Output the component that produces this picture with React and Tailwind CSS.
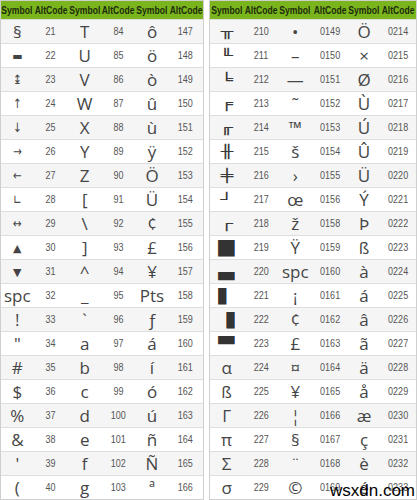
import React from "react";

const leftRows = [
  ["§", "21", "T", "84", "ô", "147"],
  ["▬", "22", "U", "85", "ö", "148"],
  ["↨", "23", "V", "86", "ò", "149"],
  ["↑", "24", "W", "87", "û", "150"],
  ["↓", "25", "X", "88", "ù", "151"],
  ["→", "26", "Y", "89", "ÿ", "152"],
  ["←", "27", "Z", "90", "Ö", "153"],
  ["∟", "28", "[", "91", "Ü", "154"],
  ["↔", "29", "\\", "92", "¢", "155"],
  ["▲", "30", "]", "93", "£", "156"],
  ["▼", "31", "^", "94", "¥", "157"],
  ["spc", "32", "_", "95", "Pts", "158"],
  ["!", "33", "`", "96", "ƒ", "159"],
  ['"', "34", "a", "97", "á", "160"],
  ["#", "35", "b", "98", "í", "161"],
  ["$", "36", "c", "99", "ó", "162"],
  ["%", "37", "d", "100", "ú", "163"],
  ["&", "38", "e", "101", "ñ", "164"],
  ["'", "39", "f", "102", "Ñ", "165"],
  ["(", "40", "g", "103", "ª", "166"],
];

const rightRows = [
  ["╥", "210", "•", "0149", "Ö", "0214"],
  ["╙", "211", "–", "0150", "×", "0215"],
  ["╘", "212", "—", "0151", "Ø", "0216"],
  ["╒", "213", "˜", "0152", "Ù", "0217"],
  ["╓", "214", "™", "0153", "Ú", "0218"],
  ["╫", "215", "š", "0154", "Û", "0219"],
  ["╪", "216", "›", "0155", "Ü", "0220"],
  ["┘", "217", "œ", "0156", "Ý", "0221"],
  ["┌", "218", "ž", "0158", "Þ", "0222"],
  ["█", "219", "Ÿ", "0159", "ß", "0223"],
  ["▄", "220", "spc", "0160", "à", "0224"],
  ["▌", "221", "¡", "0161", "á", "0225"],
  ["▐", "222", "¢", "0162", "â", "0226"],
  ["▀", "223", "£", "0163", "ã", "0227"],
  ["α", "224", "¤", "0164", "ä", "0228"],
  ["ß", "225", "¥", "0165", "å", "0229"],
  ["Γ", "226", "¦", "0166", "æ", "0230"],
  ["π", "227", "§", "0167", "ç", "0231"],
  ["Σ", "228", "¨", "0168", "è", "0232"],
  ["σ", "229", "©", "0169", "é", "0233"],
];

const headers = ["Symbol", "AltCode", "Symbol", "AltCode", "Symbol", "AltCode"];

// glyphs that the symbol font lacks get their own size so they sit like the original
const blocks = "█▄▌▐▀";
const boxes = "╥╙╘╒╓╫╪┘┌";
const arrows = "↨↑↓→←↔∟";
const small = "▲▼▬";

function symbolClass(s) {
  if (blocks.includes(s)) return "text-[14px] scale-x-[1.5] text-[#333]";
  if (boxes.includes(s)) return "text-[13px] scale-x-[1.6] text-[#3a3a3a]";
  if (arrows.includes(s)) return "text-[13px] scale-x-[0.8]";
  if (small.includes(s)) return "text-[11px]";
  return "text-[17px]";
}

const cols =
  "grid grid-cols-[minmax(0,33fr)_minmax(0,35fr)_minmax(0,33fr)_minmax(0,35fr)_minmax(0,33fr)_minmax(0,35fr)]";

function CodeTable({ rows, width }) {
  return (
    <div className={`${width} border border-[#cfcfcf] flex flex-col`}>
      {/* Header */}
      <div className={`${cols} h-[18px] bg-[#7ab51d] items-center`}>
        {headers.map((h, i) => (
          <div key={i} className="flex justify-center min-w-0">
            <span className="inline-block text-[11px] font-bold text-[#1d2b0b] leading-none scale-x-[0.78] whitespace-nowrap font-['Liberation_Sans',Arial,sans-serif]">
              {h}
            </span>
          </div>
        ))}
      </div>

      {/* Rows */}
      {rows.map((row, r) => (
        <div
          key={r}
          className={`${cols} h-[24px] items-center border-t border-[#dedede] ${
            r % 2 === 0 ? "bg-[#f5f5f5]" : "bg-white"
          }`}
        >
          {row.map((cell, c) =>
            c % 2 === 0 ? (
              <div
                key={c}
                className="flex justify-center items-center min-w-0 text-[#454545] font-['Open_Sans','DejaVu_Sans',sans-serif]"
              >
                <span className={`inline-block leading-none whitespace-nowrap ${symbolClass(cell)}`}>{cell}</span>
              </div>
            ) : (
              <div
                key={c}
                className="flex justify-center min-w-0 text-[10px] leading-none text-[#555] font-['Liberation_Sans',Arial,sans-serif]"
              >
                <span className="inline-block scale-x-[0.9]">{cell}</span>
              </div>
            )
          )}
        </div>
      ))}
    </div>
  );
}

export default function App() {
  return (
    <div className="relative w-[417px] h-[500px] bg-white overflow-hidden flex gap-[5px]">
      <CodeTable rows={leftRows} width="w-[204px]" />
      <CodeTable rows={rightRows} width="w-[208px]" />
      <span className="absolute right-[2px] bottom-[1px] text-[17px] leading-none text-black font-['Liberation_Sans',Arial,sans-serif]">
        wsxdn.com
      </span>
    </div>
  );
}
